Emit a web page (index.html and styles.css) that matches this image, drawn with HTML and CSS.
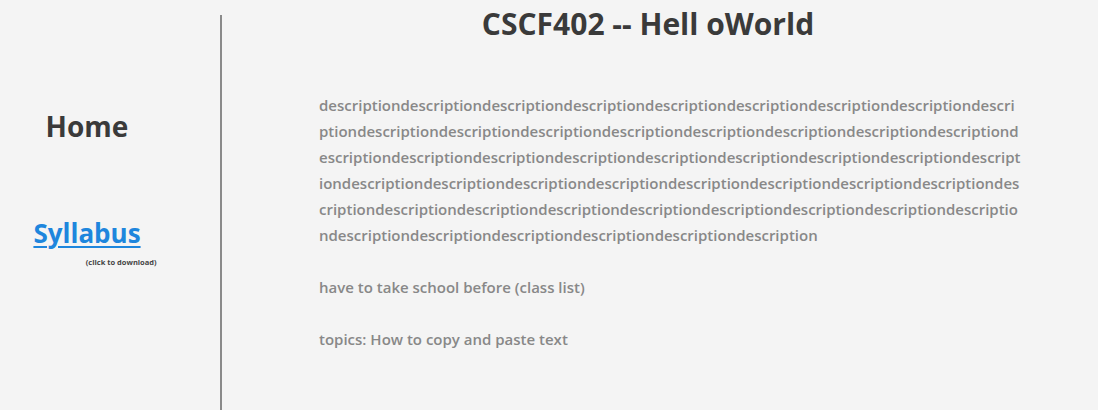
FILE: index.html
```html
<!DOCTYPE html>
<html lang="en">
<head>
<meta charset="utf-8">
<title>CSCF402 -- Hell oWorld</title>
<link rel="stylesheet" href="styles.css">
</head>
<body>
<div class="page">
  <aside class="sidebar">
    <nav class="nav">
      <a class="nav-home" href="#">Home</a>
      <div class="syllabus">
        <a class="syllabus-link" href="#">Syllabus</a>
        <span class="syllabus-note">(click to download)</span>
      </div>
    </nav>
  </aside>
  <main class="main">
    <h1 class="title">CSCF402 -- Hell oWorld</h1>
    <div class="content">
      <p class="desc">descriptiondescriptiondescriptiondescriptiondescriptiondescriptiondescriptiondescriptiondescriptiondescriptiondescriptiondescriptiondescriptiondescriptiondescriptiondescriptiondescriptiondescriptiondescriptiondescriptiondescriptiondescriptiondescriptiondescriptiondescriptiondescriptiondescriptiondescriptiondescriptiondescriptiondescriptiondescriptiondescriptiondescriptiondescriptiondescriptiondescriptiondescriptiondescriptiondescriptiondescriptiondescriptiondescriptiondescriptiondescriptiondescriptiondescriptiondescriptiondescription</p>
      <p class="desc">have to take school before (class list)</p>
      <p class="desc">topics: How to copy and paste text</p>
    </div>
  </main>
</div>
</body>
</html>
```

FILE: styles.css
```css
html, body {
  margin: 0;
  padding: 0;
  background: #f4f4f4;
  font-family: "Open Sans", "Noto Sans", sans-serif;
}

.page {
  display: flex;
  min-height: 410px;
}

.sidebar {
  width: 220px;
  flex: none;
  margin-top: 15px;
  border-right: 2px solid #8a8a8a;
}

.nav {
  width: 174px;
  display: flex;
  flex-direction: column;
  align-items: center;
  padding-top: 93px;
}

.nav-home {
  color: #3a3a3a;
  text-decoration: none;
  font-weight: 700;
  font-size: 28px;
  line-height: 36px;
}

.syllabus {
  margin-top: 72px;
  display: flex;
  flex-direction: column;
  align-items: center;
}

.syllabus-link {
  color: #1e86dd;
  font-weight: 700;
  font-size: 26px;
  line-height: 34px;
  text-decoration-thickness: 2px;
  text-underline-offset: 3px;
}

.syllabus-note {
  align-self: flex-end;
  margin-right: -16px;
  margin-top: 7px;
  font-size: 7.5px;
  font-weight: 700;
  color: #444;
}

.main {
  flex: 1;
  margin-right: 24px;
}

.title {
  margin: 0;
  padding-top: 4px;
  text-align: center;
  font-size: 30px;
  line-height: 40px;
  font-weight: 700;
  color: #3a3a3a;
}

.content {
  padding: 48px 53px 0 97px;
}

.desc {
  margin: 0 0 26px;
  font-size: 15px;
  line-height: 26px;
  font-weight: 600;
  color: #888;
  word-break: break-all;
}
```
